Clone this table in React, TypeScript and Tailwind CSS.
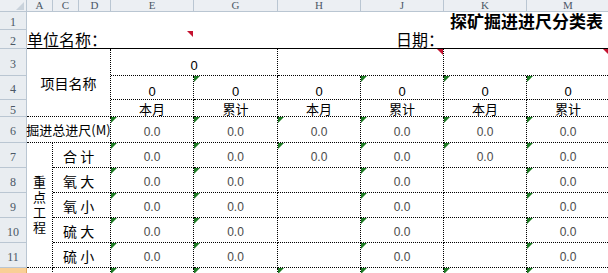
import React from 'react';

const cols = ['A', 'C', 'D', 'E', 'G', 'H', 'J', 'K', 'M'];

const colHead =
  "flex items-center justify-center border-r border-b border-[#bac6d2] bg-[#eceff3] text-[11px] leading-[11px] text-[#4b5866] font-['Liberation_Serif',serif]";
const rowHead =
  "flex items-center justify-center border-r border-b border-[#bac6d2] bg-[#e9edf1] pt-[3px] text-[12px] leading-[12px] text-[#4b5866] font-['Liberation_Serif',serif]";
const cell = 'relative flex border-r border-b border-dotted border-black';
const num = "items-end justify-center pb-[4px] text-[12px] leading-[12px] text-[#4a4a4a] font-['Liberation_Sans',Arial,sans-serif]";

function Green() {
  return (
    <svg className="absolute left-0 top-0" width="6" height="6" viewBox="0 0 6 6">
      <polygon points="0,0 6,0 0,6" fill="#1e7b24" />
    </svg>
  );
}

function Red() {
  return (
    <svg className="absolute right-0 top-0" width="6" height="6" viewBox="0 0 6 6">
      <polygon points="0,0 6,0 6,6" fill="#c4122f" />
    </svg>
  );
}

const zero = ['0', '0', '0', '0', '0', '0'];
const period = ['本月', '累计', '本月', '累计', '本月', '累计'];

const rows = [
  { n: 7, label: '合 计', vals: ['0.0', '0.0', '0.0', '0.0', '0.0', '0.0'], green: [1, 1, 1, 1, 1, 1] },
  { n: 8, label: '氧 大', vals: ['0.0', '0.0', '', '0.0', '', '0.0'], green: [1, 1, 0, 1, 0, 1] },
  { n: 9, label: '氧 小', vals: ['0.0', '0.0', '', '0.0', '', '0.0'], green: [1, 1, 0, 1, 0, 1] },
  { n: 10, label: '硫 大', vals: ['0.0', '0.0', '', '0.0', '', '0.0'], green: [1, 1, 0, 1, 0, 1] },
  { n: 11, label: '硫 小', vals: ['0.0', '0.0', '', '0.0', '', '0.0'], green: [1, 1, 0, 1, 0, 1] },
];

export default function App() {
  return (
    <div className="h-[273px] w-[608px] overflow-hidden bg-white font-['Noto_Sans_CJK_SC',sans-serif] text-black">
      <div className="grid grid-cols-[27px_26px_26px_32px_83px_84px_83px_83px_83px_83px] grid-rows-[12px_18px_19px_27px_24px_17px_26px_25px_25px_25px_25px_25px_20px]">
        {/* column letters */}
        <div className="relative border-r border-b border-[#bac6d2] bg-[#eceff3]">
          <svg className="absolute right-[2px] bottom-[1px]" width="8" height="8" viewBox="0 0 8 8">
            <polygon points="8,0 8,8 0,8" fill="#c9d2db" />
          </svg>
        </div>
        {cols.map((c) => (
          <div key={c} className={colHead}>{c}</div>
        ))}

        {/* row 1 */}
        <div className={rowHead}>1</div>
        <div className="col-span-9 flex items-end justify-end pr-[7px] text-[17px] leading-[18px] font-bold whitespace-nowrap">
          探矿掘进进尺分类表
        </div>

        {/* row 2 */}
        <div className={rowHead}>2</div>
        <div className="col-span-3 flex items-end border-b border-black text-[16px] leading-[17px] whitespace-nowrap">单位名称：</div>
        <div className="relative border-b border-black">
          <svg className="absolute right-[1px] top-[1px]" width="6" height="6" viewBox="0 0 6 6">
            <polygon points="0,0 6,0 6,6" fill="#c4122f" />
          </svg>
        </div>
        <div className="border-b border-black" />
        <div className="border-b border-black" />
        <div className="flex items-end justify-end border-b border-black text-[16px] leading-[17px] whitespace-nowrap">日期：</div>
        <div className="border-b border-black" />
        <div className="border-b border-black" />

        {/* row 3 */}
        <div className={rowHead}>3</div>
        <div className={`${cell} col-span-3 row-span-3 items-center justify-center pt-[1px] text-[14px] leading-[14px]`}>项目名称</div>
        <div className={`${cell} col-span-2 items-end justify-center pb-[3px] text-[13px] leading-[13px] font-['Liberation_Sans',Arial,sans-serif]`}>0</div>
        <div className={`${cell} col-span-2`}><Red /></div>
        <div className={`${cell} col-span-2`}><Red /></div>

        {/* row 4 */}
        <div className={rowHead}>4</div>
        {zero.map((z, i) => (
          <div key={i} className={`${cell} items-end justify-center pb-[1px] text-[13px] leading-[13px] font-['Liberation_Sans',Arial,sans-serif]`}>
            {i !== 0 && i !== 2 ? <Green /> : null}
            {z}
          </div>
        ))}

        {/* row 5 */}
        <div className={rowHead}>5</div>
        {period.map((p, i) => (
          <div key={i} className={`${cell} items-center justify-center text-[13px] leading-[13px]`}>{p}</div>
        ))}

        {/* row 6 */}
        <div className={rowHead}>6</div>
        <div className={`${cell} col-span-3 items-center justify-center whitespace-nowrap text-[13px] leading-[13px]`}>掘进总进尺(M)</div>
        {zero.map((_, i) => (
          <div key={i} className={`${cell} ${num}`}>
            <Green />
            0.0
          </div>
        ))}

        {/* rows 7-11 */}
        {rows.map((r) => (
          <React.Fragment key={r.n}>
            <div className={rowHead}>{r.n}</div>
            {r.n === 7 ? (
              <div className={`${cell} row-span-5 items-center justify-center pt-[2px]`}>
                <span className="text-[13px] leading-[13px] tracking-[2px] [writing-mode:vertical-rl]">重点工程</span>
              </div>
            ) : null}
            <div className={`${cell} col-span-2 items-center pl-[10px] pt-[1px] text-[14px] leading-[14px] whitespace-pre`}>{r.label}</div>
            {r.vals.map((v, i) => (
              <div key={i} className={`${cell} ${num}`}>
                {r.green[i] ? <Green /> : null}
                {v}
              </div>
            ))}
          </React.Fragment>
        ))}

        {/* row 12, only its top edge is in view */}
        <div className="border-r border-b border-[#e0a960] bg-[#f9cf96]" />
        <div className={cell} />
        <div className={`${cell} col-span-2`} />
        {zero.map((_, i) => (
          <div key={i} className={cell}><Green /></div>
        ))}
      </div>
    </div>
  );
}
